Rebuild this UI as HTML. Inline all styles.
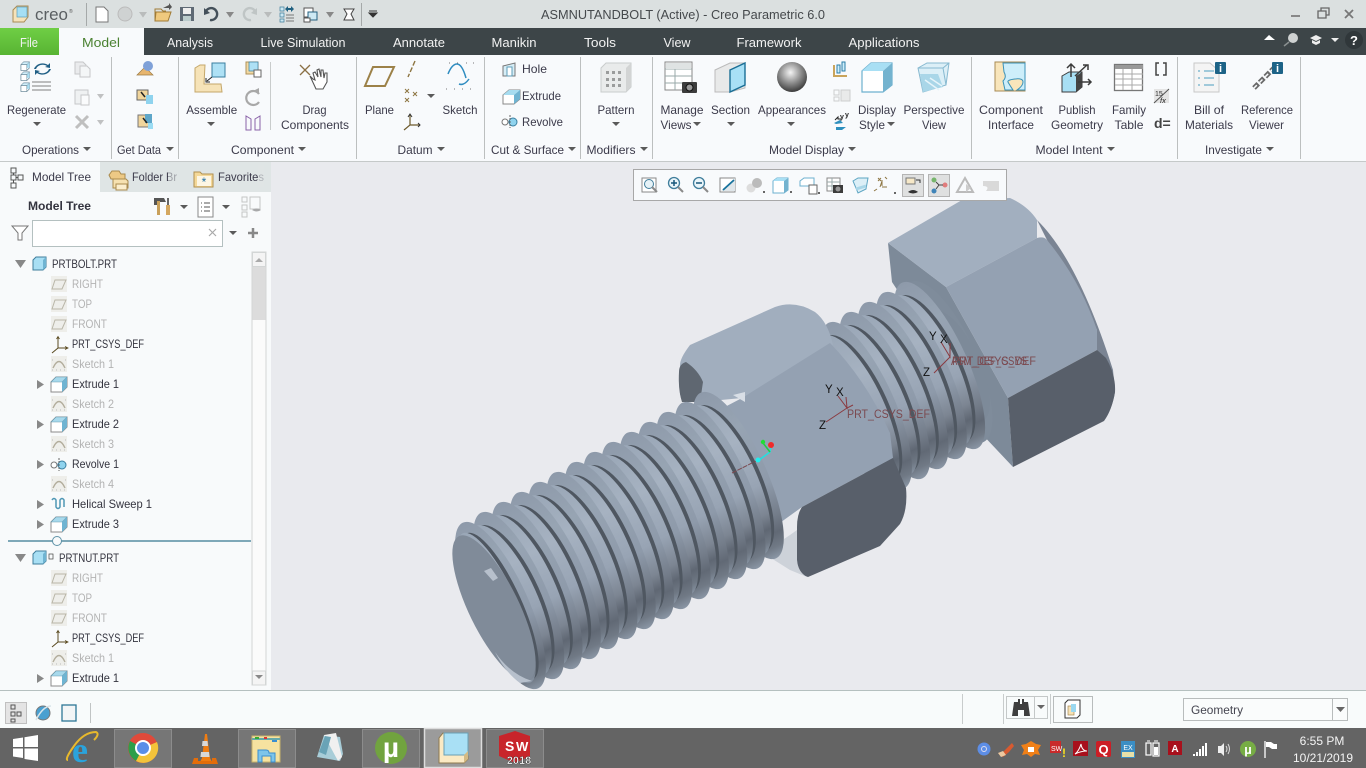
<!DOCTYPE html>
<html><head><meta charset="utf-8"><title>ASMNUTANDBOLT (Active) - Creo Parametric 6.0</title>
<style>
html,body{margin:0;padding:0;width:1366px;height:768px;overflow:hidden;background:#e9eaee}
svg{display:block}
text{font-family:"Liberation Sans",sans-serif;font-size:12px;fill:#3b3a4a}
.c{text-anchor:middle}
.t{fill:#f2f2f2;font-size:12.5px;text-anchor:middle}
.g{fill:#b3b3b3}
.d{fill:#34343f}
.m{fill:#7b4a50;font-size:11.5px}
.k{fill:#111;font-size:11.5px}
</style></head><body>
<svg width="1366" height="768" viewBox="0 0 1366 768" xmlns="http://www.w3.org/2000/svg">
<defs>
<linearGradient id="c" x1="0" x2="1" y1="0" y2="0"><stop offset="0" stop-color="#8e9aaa"/><stop offset=".25" stop-color="#97a4b3"/><stop offset=".6" stop-color="#8e9aaa"/><stop offset=".78" stop-color="#747d8a"/><stop offset=".87" stop-color="#616975"/><stop offset=".94" stop-color="#707985"/><stop offset="1" stop-color="#8b97a6"/></linearGradient>
<linearGradient id="f" x1="0" x2="1" y1="0" y2="0"><stop offset="0" stop-color="#9aa7b7"/><stop offset=".3" stop-color="#a6b2c1"/><stop offset=".6" stop-color="#98a4b4"/><stop offset=".78" stop-color="#7c8592"/><stop offset=".87" stop-color="#5f6773"/><stop offset=".94" stop-color="#6e7783"/><stop offset="1" stop-color="#8894a3"/></linearGradient>
<radialGradient id="sph" cx=".45" cy=".35" r=".7"><stop offset="0" stop-color="#f4f4f4"/><stop offset=".5" stop-color="#8f8f8f"/><stop offset="1" stop-color="#2f2f2f"/></radialGradient>
<linearGradient id="fg" x1="0" x2="0" y1="0" y2="1"><stop offset="0" stop-color="#6fce45"/><stop offset="1" stop-color="#58b433"/></linearGradient>
<g id="p">
<ellipse transform="rotate(65.6)" rx="91" ry="28" fill="url(#c)"/>
<ellipse transform="translate(-6,3.300) rotate(65.6)" rx="80" ry="28" fill="#4f5761"/>
<ellipse transform="translate(-9.500,5.200) rotate(65.6)" rx="82" ry="28" fill="url(#f)"/>
</g>
<g id="cube"><path d="M0 4L4 0H13V9L9 13H0Z" fill="#ffffff" stroke="#5b7d8e"/><path d="M4 0H13V9H4Z" fill="#a9def2"/><path d="M0 4L4 0H13L9 4ZM9 4H0" fill="#d2effa" stroke="#5b7d8e" stroke-width=".6"/><path d="M0 4H9V13H0Z" fill="#fff" stroke="#5b7d8e" stroke-width=".8"/></g>
<g id="pl"><rect x="0" y="0" width="16" height="16" fill="#eeeeea"/><path d="M4 4H15L11 13H1Z" fill="none" stroke="#b9b6a8"/></g>
<g id="sk"><rect x="0" y="0" width="16" height="16" fill="#eeeeea"/><path d="M2 12Q8 -1 14 12" fill="none" stroke="#b2ad9c" stroke-width="1.4"/><path d="M1 14h1M5 14h1M9 14h1M13 14h1M1 4h1M14 4h1" stroke="#bbb"/></g>
<g id="ex"><path d="M1 7L6 2H17V12L12 17H1Z" fill="#fff" stroke="#8b8b8b"/><path d="M1 7L6 2H17L12 7Z" fill="#a8d9ec" stroke="#6a9bb0" stroke-width=".6"/><path d="M12 7L17 2V12L12 17Z" fill="#6fb4d2"/></g>
<g id="cs"><path d="M7 1V12L1 17M7 12H16" fill="none" stroke="#5a4a20"/><path d="M5.5 3L7 0.5 8.5 3M14 10.5l3 1.5-3 1.500" fill="none" stroke="#5a4a20" stroke-width=".8"/></g>
<g id="tri"><path d="M0 0H10L5 7Z" fill="#888"/></g>
<g id="ar"><path d="M0 0H8L4 4Z" fill="#5a5a5a"/></g>
</defs>

<!-- title bar -->
<rect width="1366" height="28" fill="#dbe0e0"/>
<path d="M13 10L17 6H28V17L24 22H13Z" fill="#f6e3ba" stroke="#a88b55"/><rect x="17" y="7" width="10" height="10" fill="#a6dff4" stroke="#5f9db8" stroke-width=".7"/>
<text x="35" y="20" style="font-size:17px;fill:#5a5f62" textLength="33" lengthAdjust="spacingAndGlyphs">creo</text><text x="69" y="13" style="font-size:5px;fill:#555">®</text>
<rect x="86" y="3" width="1" height="23" fill="#a5a9a9"/>
<path d="M96 7H104L108 11V22H96Z" fill="#fff" stroke="#777"/>
<circle cx="125" cy="14" r="7" fill="#cfd2d2" stroke="#bbb"/>
<use href="#tri" transform="translate(139,12) scale(.8)" opacity=".4"/>
<path d="M156 12H171L168 21H155Z" fill="#efc97e" stroke="#a07b36"/><path d="M155 21V9H161L163 11H166" fill="none" stroke="#a07b36"/><path d="M163 8l6-3v-2l3 4-3 3v-2z" fill="#555"/>
<path d="M180 7H194V21H180Z" fill="#5f6a75"/><rect x="183" y="8" width="8" height="6" fill="#eee"/><rect x="183" y="16" width="8" height="5" fill="#bcc"/>
<path d="M206 11a6 6 0 1 1 4 9" fill="none" stroke="#44505a" stroke-width="2.4"/><path d="M204 8l0 7 6-2z" fill="#44505a"/>
<use href="#tri" transform="translate(226,12) scale(.8)"/>
<path d="M255 11a6 6 0 1 0-4 9" fill="none" stroke="#bfc5c5" stroke-width="2.400"/><path d="M257 8l0 7-6-2z" fill="#bfc5c5"/>
<use href="#tri" transform="translate(264,12) scale(.8)" opacity=".4"/>
<path d="M280 7h4v4h-4zM280 13h4v4h-4zM280 19h4v3h-4z" fill="#cde9f4" stroke="#3f7d9b" stroke-width=".7"/><path d="M286 15h8M286 18h8M286 21h8" stroke="#777"/><path d="M285 9l3-3v2h3v-2l3 3-3 3v-2h-3v2z" fill="#1f6080"/>
<rect x="304" y="8" width="9" height="9" fill="#fff" stroke="#555"/><rect x="308" y="12" width="9" height="8" fill="#cde9f4" stroke="#24607f"/><rect x="304" y="18" width="6" height="4" fill="#fff" stroke="#555"/>
<use href="#tri" transform="translate(326,12) scale(.8)"/>
<path d="M344 9h10l-3 5 3 6h-10l3-6z" fill="#fff" stroke="#444"/>
<rect x="361" y="3" width="1" height="23" fill="#a5a9a9"/>
<path d="M369 11h8M369 13h8l-4 4z" stroke="#333" fill="#333"/>
<text x="683" y="19" class="c" style="font-size:13px;fill:#45494c" textLength="284" lengthAdjust="spacingAndGlyphs">ASMNUTANDBOLT (Active) - Creo Parametric 6.0</text>
<rect x="1291" y="15" width="9" height="2" fill="#888"/>
<path d="M1318 11h8v7h-8zM1321 11v-3h8v7h-3" fill="none" stroke="#666" stroke-width="1.300"/>
<path d="M1345 10l8 8M1353 10l-8 8" stroke="#777" stroke-width="1.800"/>

<!-- tab bar -->
<rect y="28" width="1366" height="27" fill="#3d4548"/>
<rect y="28" width="59" height="27" fill="url(#fg)"/>
<rect x="59" y="28" width="85" height="27" fill="#f8fafc"/>
<text x="29" y="47" class="t" textLength="18" lengthAdjust="spacingAndGlyphs">File</text>
<text x="101" y="47" class="c" style="fill:#4b8232;font-size:12.500px" textLength="38" lengthAdjust="spacingAndGlyphs">Model</text>
<text x="190" y="47" class="t" textLength="46" lengthAdjust="spacingAndGlyphs">Analysis</text><text x="303" y="47" class="t" textLength="85" lengthAdjust="spacingAndGlyphs">Live Simulation</text><text x="419" y="47" class="t" textLength="52" lengthAdjust="spacingAndGlyphs">Annotate</text><text x="514" y="47" class="t" textLength="45" lengthAdjust="spacingAndGlyphs">Manikin</text><text x="600" y="47" class="t" textLength="32" lengthAdjust="spacingAndGlyphs">Tools</text><text x="677" y="47" class="t" textLength="27" lengthAdjust="spacingAndGlyphs">View</text><text x="769" y="47" class="t" textLength="65" lengthAdjust="spacingAndGlyphs">Framework</text><text x="884" y="47" class="t" textLength="71" lengthAdjust="spacingAndGlyphs">Applications</text>
<path d="M1264 40l5-5 6 5z" fill="#fff"/>
<circle cx="1293" cy="38" r="5" fill="#cfd2d2"/><path d="M1289 42l-5 4" stroke="#8a9090" stroke-width="1.500"/>
<path d="M1310 38l6-3 6 3-6 3zM1312 40v3l4 2 4-2v-3l-4 2z" fill="#eee"/>
<path d="M1331 38h8l-4 4z" fill="#eee"/>
<circle cx="1354" cy="40" r="9" fill="#30373a"/><text x="1354" y="45" class="c" style="fill:#fff;font-weight:bold;font-size:13px">?</text>

<!-- ribbon -->
<rect y="55" width="1366" height="106" fill="#f8fafc"/>
<rect y="161" width="1366" height="1" fill="#c5c9c9"/>
<path d="M111.500 57V159M178.500 57V159M356.500 57V159M484.500 57V159M580.500 57V159M652.500 57V159M971.500 57V159M1177.500 57V159M1300.500 57V159" stroke="#bcbfbf"/>
<path d="M270.500 62V130" stroke="#c9cccc"/>

<!-- Operations -->
<use href="#cube" transform="translate(21,62) scale(.65)"/><use href="#cube" transform="translate(21,72) scale(.65)"/><use href="#cube" transform="translate(21,83) scale(.65)"/>
<path d="M36 69a7 6 0 0 1 11-3l-2 1 5 1v-5l-2 2a9 8 0 0 0-14 4z" fill="#205f85"/><path d="M49 69a7 6 0 0 1-11 3l2-1-5-1v5l2-2a9 8 0 0 0 14-4z" fill="#205f85"/>
<path d="M32 82h19M32 86h19M32 90h19" stroke="#999" stroke-width="1.300"/>
<text x="36.500" y="114" class="c" textLength="59" lengthAdjust="spacingAndGlyphs">Regenerate</text><use href="#ar" transform="translate(33,122)"/>
<g opacity=".3"><path d="M75 62h8l3 3v9h-11z" fill="#ccc" stroke="#555"/><path d="M80 66h7l3 3v8h-10z" fill="#eee" stroke="#555"/><path d="M75 90h13v14h-13z" fill="#ddd" stroke="#555"/><path d="M81 95h8v10h-8z" fill="#fff" stroke="#555"/></g>
<path d="M76 116l12 12M88 116l-12 12" stroke="#bfbfbf" stroke-width="3"/>
<use href="#tri" transform="translate(97,94) scale(.7)" opacity=".5"/><use href="#tri" transform="translate(97,120) scale(.7)" opacity=".5"/>
<text x="50.500" y="154" class="c" textLength="57" lengthAdjust="spacingAndGlyphs">Operations</text><use href="#ar" transform="translate(83,147)"/>
<!-- Get Data -->
<path d="M137 75l8-8 8 8z" fill="#e7b56e" stroke="#9b7b44" stroke-width=".7"/><circle cx="148" cy="66" r="5" fill="#7fa1d8"/>
<rect x="137" y="90" width="11" height="10" fill="#f1d59c" stroke="#666"/><rect x="146" y="95" width="7" height="9" fill="#8fd3ee"/><path d="M141 92l4 5" stroke="#222" stroke-width="1.500"/>
<rect x="138" y="115" width="12" height="12" fill="#f1d59c" stroke="#777"/><rect x="145" y="114" width="7" height="9" fill="#5ea6c9"/><rect x="148" y="123" width="5" height="6" fill="#9bdcf3"/><path d="M143 118l4 5" stroke="#222" stroke-width="1.500"/>
<text x="139" y="154" class="c" textLength="44" lengthAdjust="spacingAndGlyphs">Get Data</text><use href="#ar" transform="translate(166,147)"/>
<!-- Component -->
<path d="M195 68l5-3h5l-1 19h17l1 8H195z" fill="#f6e3b8" stroke="#c4a76a"/><rect x="212" y="63" width="13" height="14" fill="#aee1f5" stroke="#3a7fa0"/>
<path d="M212 77l-5 4M206 78v4h4" stroke="#222" fill="none"/>
<text x="211.700" y="114" class="c" textLength="51" lengthAdjust="spacingAndGlyphs">Assemble</text><use href="#ar" transform="translate(207,122)"/>
<rect x="246" y="62" width="12" height="12" fill="#f2d9a3" stroke="#b0925a"/><rect x="249" y="62" width="9" height="9" fill="#aee1f5" stroke="#3a7fa0" stroke-width=".7"/><rect x="254" y="70" width="7" height="7" fill="#fff" stroke="#666"/>
<path d="M259 94a7 7 0 1 0 0 8" fill="none" stroke="#a8a8a8" stroke-width="2.200"/><path d="M253 91l6 3v-6z" fill="#a8a8a8"/>
<path d="M246 130v-14l5 3v11zM260 130v-14l-5 3v11z" fill="none" stroke="#8a63a8"/>
<path d="M300 65l10 10M310 65l-10 10" stroke="#8a7045" stroke-width="1.300"/>
<path d="M310 76l6 13h7l4-7v-9l-2 0-1 5-1-8-2 0v7l-2-8-2 1 1 7-3-5-2 1 2 7-2-1z" fill="#fff" stroke="#555" stroke-width="1.100"/>
<text x="314.500" y="114" class="c" textLength="24" lengthAdjust="spacingAndGlyphs">Drag</text><text x="315" y="129" class="c" textLength="68" lengthAdjust="spacingAndGlyphs">Components</text>
<text x="262.500" y="154" class="c" textLength="63" lengthAdjust="spacingAndGlyphs">Component</text><use href="#ar" transform="translate(298,147)"/>
<!-- Datum -->
<path d="M373 67h21l-9 19h-20z" fill="none" stroke="#9c8148" stroke-width="2"/>
<path d="M415 61l-7 16" stroke="#8d7542" stroke-dasharray="5 2" stroke-width="1.400"/>
<path d="M405 89l4 4M409 89l-4 4M413 92l4 4M417 92l-4 4M405 98l4 4M409 98l-4 4" stroke="#8d7542"/>
<use href="#ar" transform="translate(427,94)"/>
<path d="M410 115v10l-6 5M410 125h10" fill="none" stroke="#6d5a2c" stroke-width="1.200"/><path d="M408 117l2-3 2 3M418 123l2 2-2 2" fill="none" stroke="#333"/>
<text x="379.500" y="114" class="c" textLength="29" lengthAdjust="spacingAndGlyphs">Plane</text>
<path d="M448 74q4-10 9-10t9 14" fill="none" stroke="#2f8cc0" stroke-width="1.500"/><path d="M459 84q5 2 10-5" fill="none" stroke="#2f8cc0" stroke-width="1.500"/>
<path d="M449 63h1M457 63h1M466 63h1M473 63h1M446 89h1M454 89h1M462 89h1M470 89h1" stroke="#777"/>
<text x="460" y="114" class="c" textLength="35" lengthAdjust="spacingAndGlyphs">Sketch</text>
<text x="415" y="154" class="c" textLength="35" lengthAdjust="spacingAndGlyphs">Datum</text><use href="#ar" transform="translate(437,147)"/>
<!-- Cut&Surface -->
<path d="M503 66l12-3v13h-12z" fill="#d6edf6" stroke="#777"/><path d="M507 67h5v9h-5z" fill="#fff" stroke="#5f9db8"/>
<text x="522" y="73" textLength="25" lengthAdjust="spacingAndGlyphs">Hole</text>
<path d="M503 95l6-5h11v9l-6 5h-11z" fill="#fff" stroke="#888"/><path d="M509 90h11l-6 5h-11z" fill="#a6dcf0"/><path d="M514 95l6-5v9l-6 5z" fill="#6fb4d2"/>
<text x="522" y="100" textLength="39" lengthAdjust="spacingAndGlyphs">Extrude</text>
<circle cx="505" cy="122" r="3" fill="#fff" stroke="#777"/><circle cx="513" cy="122" r="4" fill="#8fd3ee" stroke="#3a7fa0"/><path d="M510 115v13" stroke="#666" stroke-dasharray="2 1"/>
<text x="522" y="126" textLength="41" lengthAdjust="spacingAndGlyphs">Revolve</text>
<text x="527.500" y="154" class="c" textLength="73" lengthAdjust="spacingAndGlyphs">Cut &amp; Surface</text><use href="#ar" transform="translate(568,147)"/>
<!-- Modifiers -->
<path d="M601 68l5-5h25v24l-5 5h-25z" fill="#e9ebeb" stroke="#c9cccc"/><path d="M626 68l5-5v24l-5 5z" fill="#d2d4d4"/>
<path d="M606 71h3v3h-3zM612 71h3v3h-3zM618 71h3v3h-3zM606 78h3v3h-3zM612 78h3v3h-3zM618 78h3v3h-3zM606 84h3v3h-3zM612 84h3v3h-3zM618 84h3v3h-3z" fill="#9a9c9c"/>
<text x="616" y="114" class="c" textLength="37" lengthAdjust="spacingAndGlyphs">Pattern</text><use href="#ar" transform="translate(612,122)"/>
<text x="611" y="154" class="c" textLength="49" lengthAdjust="spacingAndGlyphs">Modifiers</text><use href="#ar" transform="translate(640,147)"/>
<!-- Model Display -->
<rect x="665" y="62" width="27" height="28" fill="#fff" stroke="#888"/><path d="M665 69h27M665 76h27M665 83h27M675 69v21" stroke="#9aa"/><rect x="666" y="63" width="25" height="6" fill="#dfe3e3"/>
<rect x="682" y="82" width="15" height="11" rx="1" fill="#3c3c3c"/><circle cx="689.500" cy="87.500" r="3.500" fill="#999" stroke="#111"/>
<text x="682" y="114" class="c" textLength="43" lengthAdjust="spacingAndGlyphs">Manage</text><text x="676" y="129" class="c" textLength="31" lengthAdjust="spacingAndGlyphs">Views</text><use href="#ar" transform="translate(693,122)"/>
<path d="M715 70l15-7h15v25l-15 4h-15z" fill="#e8e9e9" stroke="#bbb"/><path d="M730 70l15-7v22l-15 7z" fill="#a8e0f6" stroke="#1b6f96" stroke-width="1.400"/>
<text x="730.500" y="114" class="c" textLength="39" lengthAdjust="spacingAndGlyphs">Section</text><use href="#ar" transform="translate(727,122)"/>
<circle cx="792" cy="77" r="15" fill="url(#sph)"/>
<text x="792" y="114" class="c" textLength="68" lengthAdjust="spacingAndGlyphs">Appearances</text><use href="#ar" transform="translate(787,122)"/>
<path d="M834 65v11h13" fill="none" stroke="#c9a45b" stroke-width="2"/><path d="M837 65h3v8h-3zM842 62h3v9h-3z" fill="#cfeefa" stroke="#2b7ea8"/>
<g opacity=".55"><rect x="834" y="90" width="5" height="5" fill="none" stroke="#aaa"/><rect x="834" y="97" width="5" height="4" fill="none" stroke="#aaa"/><rect x="841" y="90" width="9" height="11" fill="#ddd" stroke="#aaa"/></g>
<text x="840" y="119" style="font-size:7px;fill:#222;font-weight:bold">y</text><text x="845" y="117" style="font-size:7px;fill:#222;font-weight:bold">y</text><path d="M834 123l6-3 3 3-7 1zM836 127h10l-4 3h-6z" fill="#2e8fbe"/><path d="M835 120l3-3v2h3" fill="none" stroke="#222"/>
<path d="M862 71l9-8h21v22l-9 7h-21z" fill="#fff" stroke="#6db0cf" stroke-width="1.200"/><path d="M871 63h21l-9 8h-21z" fill="#a8dff4"/><path d="M883 71l9-8v22l-9 7z" fill="#74b3cf"/>
<text x="877" y="114" class="c" textLength="38" lengthAdjust="spacingAndGlyphs">Display</text><text x="872" y="129" class="c" textLength="26" lengthAdjust="spacingAndGlyphs">Style</text><use href="#ar" transform="translate(887,122)"/>
<path d="M918 68l9-5h22l-3 22-23 7z" fill="#dceff7" stroke="#87b9d0"/><path d="M918 68h25l6-5M943 68l3 17" fill="none" stroke="#87b9d0"/><path d="M923 92l20-5-5-13-18 0z" fill="#a9d6e8"/><path d="M925 80l14 10M930 78l12 8" stroke="#e6f4fa" stroke-width="1.500"/>
<text x="934" y="114" class="c" textLength="61" lengthAdjust="spacingAndGlyphs">Perspective</text><text x="934" y="129" class="c" textLength="24" lengthAdjust="spacingAndGlyphs">View</text>
<text x="806.500" y="154" class="c" textLength="75" lengthAdjust="spacingAndGlyphs">Model Display</text><use href="#ar" transform="translate(848,147)"/>
<!-- Model Intent -->
<rect x="995" y="62" width="30" height="29" fill="#f8e5bb" stroke="#a88b55"/><path d="M1003 63h22v27h-8q6-4 6-8t-8-3-7 3 5 8h-8l-2-9q4-4 1-9z" fill="#cdeefa" stroke="#3b92b8"/>
<text x="1011" y="114" class="c" textLength="64" lengthAdjust="spacingAndGlyphs">Component</text><text x="1011" y="129" class="c" textLength="46" lengthAdjust="spacingAndGlyphs">Interface</text>
<path d="M1062 76l7-4h13v15l-6 5h-14z" fill="#a8dff4" stroke="#3b3b3b"/><path d="M1076 76l6-4v15l-6 5z" fill="#444"/>
<path d="M1071 77V64M1067 68l4-4 4 4M1075 76l12-11M1083 65h5v5M1078 82h13M1088 79l3 3-3 3" fill="none" stroke="#3b3b3b" stroke-width="1.500"/>
<text x="1077" y="114" class="c" textLength="37" lengthAdjust="spacingAndGlyphs">Publish</text><text x="1077" y="129" class="c" textLength="52" lengthAdjust="spacingAndGlyphs">Geometry</text>
<rect x="1114.500" y="64.500" width="28" height="26" fill="#fff" stroke="#777" stroke-width="1.300"/><rect x="1115" y="65" width="28" height="4" fill="#999"/><path d="M1115 74h28M1115 79h28M1115 85h28M1123 69v21M1132 69v21" stroke="#aaa"/>
<text x="1129" y="114" class="c" textLength="34" lengthAdjust="spacingAndGlyphs">Family</text><text x="1129" y="129" class="c" textLength="29" lengthAdjust="spacingAndGlyphs">Table</text>
<path d="M1159 63h-3v12h3M1163 63h3v12h-3" fill="none" stroke="#444" stroke-width="1.500"/>
<rect x="1154" y="89" width="15" height="14" fill="#e4e4e4"/><path d="M1154 103l15-14" stroke="#555"/><text x="1155" y="96" style="font-size:7px;fill:#333">15</text><text x="1160" y="103" style="font-size:7.500px;fill:#222;font-style:italic">fx</text>
<text x="1154" y="128" style="font-size:14px;font-weight:bold;fill:#444">d=</text>
<text x="1069" y="154" class="c" textLength="67" lengthAdjust="spacingAndGlyphs">Model Intent</text><use href="#ar" transform="translate(1107,147)"/>
<!-- Investigate -->
<path d="M1194 63h16l9 8v21h-25z" fill="#f4f4f4" stroke="#c8c8c8"/><path d="M1198 71h2M1204 71h10M1198 78h2M1204 78h10M1198 85h2M1204 85h10" stroke="#4b9ec0"/>
<rect x="1215" y="62" width="11" height="12" rx="1" fill="#1d6387"/><text x="1220.500" y="72" class="c" style="fill:#fff;font-size:11px;font-weight:bold">i</text>
<text x="1209" y="114" class="c" textLength="30" lengthAdjust="spacingAndGlyphs">Bill of</text><text x="1209" y="129" class="c" textLength="48" lengthAdjust="spacingAndGlyphs">Materials</text>
<path d="M1254 88l20-20" stroke="#6a6a6a" stroke-width="5" stroke-dasharray="6 2"/><path d="M1254 88l20-20" stroke="#f8fafc" stroke-width="1.500" stroke-dasharray="4 4"/>
<rect x="1272" y="62" width="11" height="12" rx="1" fill="#1d6387"/><text x="1277.500" y="72" class="c" style="fill:#fff;font-size:11px;font-weight:bold">i</text>
<text x="1267" y="114" class="c" textLength="52" lengthAdjust="spacingAndGlyphs">Reference</text><text x="1266.500" y="129" class="c" textLength="35" lengthAdjust="spacingAndGlyphs">Viewer</text>
<text x="1233.500" y="154" class="c" textLength="57" lengthAdjust="spacingAndGlyphs">Investigate</text><use href="#ar" transform="translate(1266,147)"/>

<!-- viewport bg -->
<rect x="273" y="162" width="1093" height="528" fill="#e9eaee"/>

<!-- left panel -->
<rect y="162" width="271" height="528" fill="#f8fafb"/>
<rect x="100" y="162" width="171" height="30" fill="#dfe5e5"/>
<path d="M11 168h5v5h-5zM11 175h5v5h-5zM11 183h5v5h-5zM18 175h5v5h-5zM13.500 173v2M13.500 180v3M16 177.500h2" fill="none" stroke="#555"/>
<text x="32" y="181" textLength="59" lengthAdjust="spacingAndGlyphs">Model Tree</text>
<path d="M109 175l3-4h7l2 3h4v5h-14z" fill="#edc985" stroke="#a98a4e"/><path d="M113 179h13l2 2v7h-15z" fill="#f6e1b0" stroke="#a98a4e"/><path d="M116 184h11v6h-11z" fill="#fbeecd" stroke="#a98a4e"/>
<text x="132" y="181" textLength="45" lengthAdjust="spacingAndGlyphs">Folder Br</text><rect x="168" y="165" width="12" height="22" fill="#dfe5e5" opacity=".6"/>
<path d="M194 172h6l2 2h11v13h-19z" fill="#f4d898" stroke="#b09050"/><rect x="197" y="176" width="14" height="10" fill="#fdf6e4"/><text x="204" y="186" class="c" style="fill:#1d6fa6;font-size:12px">*</text>
<text x="218" y="181" textLength="46" lengthAdjust="spacingAndGlyphs">Favorites</text><rect x="258" y="165" width="6" height="22" fill="#dfe5e5" opacity=".7"/>
<text x="28" y="210" class="d" style="font-weight:bold" textLength="63" lengthAdjust="spacingAndGlyphs">Model Tree</text>
<path d="M154 198h10l2 4h-7v3h-5z" fill="#555"/><rect x="157" y="201" width="3" height="14" fill="#c9a05a"/><rect x="167" y="198" width="2" height="8" fill="#666"/><rect x="166" y="205" width="4" height="10" fill="#d4a75f"/>
<use href="#ar" transform="translate(180,205)" /><path d="M198 197h15v20h-15z" fill="#fff" stroke="#888"/><path d="M201 203h1M204 203h6M201 207h1M204 207h6M201 211h1M204 211h6" stroke="#555"/>
<use href="#ar" transform="translate(222,205)"/>
<g opacity=".4"><path d="M242 197h5v5h-5zM242 205h5v5h-5zM242 212h5v5h-5zM250 197h10v12h-10z" fill="none" stroke="#777"/><path d="M252 210q5-3 9 0q-4 3-9 0z" fill="#333"/></g>
<path d="M12 226h16l-6 7v7h-4v-7z" fill="#fff" stroke="#777"/>
<rect x="32.500" y="220.500" width="190" height="26" fill="#fff" stroke="#b4c0c0"/>
<path d="M209 229l7 7M216 229l-7 7" stroke="#aaa" stroke-width="1.200"/>
<use href="#ar" transform="translate(229,231)"/><path d="M253 228v10M248 233h10" stroke="#888" stroke-width="2.500"/>
<!-- scrollbar -->
<rect x="252" y="252" width="14" height="433" fill="#fbfbfb" stroke="#d3d6d6"/>
<rect x="252.500" y="267" width="13" height="53" fill="#dcdcdc"/><rect x="252.500" y="252.500" width="13" height="14" fill="#f4f4f4" stroke="#d3d6d6"/><rect x="252.500" y="671" width="13" height="14" fill="#f4f4f4" stroke="#d3d6d6"/>
<path d="M255 262l4-4 4 4z" fill="#aaa"/><path d="M255 675l4 4 4-4z" fill="#888"/>
<!-- tree -->
<path d="M15 260h11l-5.500 8z" fill="#888"/>
<path d="M33 260l3-3h10v10l-3 3h-10z" fill="#a8dff4" stroke="#3f7d9b"/><path d="M43 260l3-3v10l-3 3z" fill="#6fb4d2"/>
<text x="52" y="268" class="d" textLength="65" lengthAdjust="spacingAndGlyphs">PRTBOLT.PRT</text>
<use href="#pl" transform="translate(51,276)"/><text x="72" y="288" class="g" textLength="31" lengthAdjust="spacingAndGlyphs">RIGHT</text>
<use href="#pl" transform="translate(51,296)"/><text x="72" y="308" class="g" textLength="20" lengthAdjust="spacingAndGlyphs">TOP</text>
<use href="#pl" transform="translate(51,316)"/><text x="72" y="328" class="g" textLength="35" lengthAdjust="spacingAndGlyphs">FRONT</text>
<use href="#cs" transform="translate(51,336)"/><text x="72" y="348" class="d" textLength="72" lengthAdjust="spacingAndGlyphs">PRT_CSYS_DEF</text>
<use href="#sk" transform="translate(51,356)"/><text x="72" y="368" class="g" textLength="42" lengthAdjust="spacingAndGlyphs">Sketch 1</text>
<path d="M37 380l7 4.500-7 4.500z" fill="#888"/><use href="#ex" transform="translate(50,375)"/><text x="72" y="388" class="d" textLength="47" lengthAdjust="spacingAndGlyphs">Extrude 1</text>
<use href="#sk" transform="translate(51,396)"/><text x="72" y="408" class="g" textLength="42" lengthAdjust="spacingAndGlyphs">Sketch 2</text>
<path d="M37 420l7 4.500-7 4.500z" fill="#888"/><use href="#ex" transform="translate(50,415)"/><text x="72" y="428" class="d" textLength="47" lengthAdjust="spacingAndGlyphs">Extrude 2</text>
<use href="#sk" transform="translate(51,436)"/><text x="72" y="448" class="g" textLength="42" lengthAdjust="spacingAndGlyphs">Sketch 3</text>
<path d="M37 460l7 4.500-7 4.500z" fill="#888"/><circle cx="54" cy="465" r="3" fill="#fff" stroke="#777"/><circle cx="62" cy="465" r="4" fill="#8fd3ee" stroke="#3a7fa0"/><path d="M59 458v13" stroke="#666" stroke-dasharray="2 1"/><text x="72" y="468" class="d" textLength="47" lengthAdjust="spacingAndGlyphs">Revolve 1</text>
<use href="#sk" transform="translate(51,476)"/><text x="72" y="488" class="g" textLength="42" lengthAdjust="spacingAndGlyphs">Sketch 4</text>
<path d="M37 500l7 4.500-7 4.500z" fill="#888"/><path d="M52 500q2-3 4 0v7q2 3 4 0v-7q2-3 4 0v7" fill="none" stroke="#4f97b5" stroke-width="1.500"/><text x="72" y="508" class="d" textLength="80" lengthAdjust="spacingAndGlyphs">Helical Sweep 1</text>
<path d="M37 520l7 4.500-7 4.500z" fill="#888"/><use href="#ex" transform="translate(50,515)"/><text x="72" y="528" class="d" textLength="47" lengthAdjust="spacingAndGlyphs">Extrude 3</text>
<rect x="8" y="540" width="243" height="2" fill="#7ea8b8"/><circle cx="57" cy="541" r="4.500" fill="#f8fafb" stroke="#5f93a8"/>
<path d="M15 554h11l-5.500 8z" fill="#888"/>
<path d="M33 554l3-3h10v10l-3 3h-10z" fill="#a8dff4" stroke="#3f7d9b"/><path d="M43 554l3-3v10l-3 3z" fill="#6fb4d2"/>
<rect x="49" y="554" width="4" height="5" fill="none" stroke="#444" stroke-width=".7"/>
<text x="59" y="562" class="d" textLength="60" lengthAdjust="spacingAndGlyphs">PRTNUT.PRT</text>
<use href="#pl" transform="translate(51,570)"/><text x="72" y="582" class="g" textLength="31" lengthAdjust="spacingAndGlyphs">RIGHT</text>
<use href="#pl" transform="translate(51,590)"/><text x="72" y="602" class="g" textLength="20" lengthAdjust="spacingAndGlyphs">TOP</text>
<use href="#pl" transform="translate(51,610)"/><text x="72" y="622" class="g" textLength="35" lengthAdjust="spacingAndGlyphs">FRONT</text>
<use href="#cs" transform="translate(51,630)"/><text x="72" y="642" class="d" textLength="72" lengthAdjust="spacingAndGlyphs">PRT_CSYS_DEF</text>
<use href="#sk" transform="translate(51,650)"/><text x="72" y="662" class="g" textLength="42" lengthAdjust="spacingAndGlyphs">Sketch 1</text>
<path d="M37 674l7 4.500-7 4.500z" fill="#888"/><use href="#ex" transform="translate(50,669)"/><text x="72" y="682" class="d" textLength="47" lengthAdjust="spacingAndGlyphs">Extrude 1</text>

<!-- MODEL: bolt head -->
<path d="M888 243L892 282L960 385L980 432L1013 467L1008 398L946 287Z" fill="#7d8a99"/>
<path d="M1037 220Q1078 260 1113 370L1115 392Q1112 410 1104 419L1097 350L1097 330L1047 240Z" fill="#7a8493"/>
<path d="M888 243L962 200L1010 198Q1028 206 1037 220L1037 238L946 287Z" fill="#a2afbf"/>
<path d="M946 287L1037 238Q1044 236 1047 240Q1080 280 1097 330L1097 350L1008 398Z" fill="#94a1b2"/>
<path d="M1008 398L1097 350L1106 358Q1116 375 1115 392Q1112 410 1104 421L1013 467Z" fill="#585f6a"/>
<!-- threads near head -->
<ellipse transform="translate(947,362) rotate(65.600)" rx="88" ry="30" fill="#7f8c9b"/>
<ellipse transform="translate(958,366) rotate(65.600)" rx="60" ry="22" fill="#7d8a99"/>
<use href="#p" transform="translate(939.700,365.500)"/>
<use href="#p" transform="translate(921.400,375.500)"/>
<use href="#p" transform="translate(903.100,385.500)"/>
<use href="#p" transform="translate(884.800,395.500)"/>
<use href="#p" transform="translate(866.500,405.500)"/>
<!-- MODEL: nut -->
<path d="M680 365Q680 358 690 345L775 307Q795 300 815 312Q828 322 833 345L742 398L700 402L680 395Z" fill="#a1aebe"/>
<path d="M679 372Q679 364 686 362Q698 370 703 382L700 402L682 402Q678 390 679 372Z" fill="#5f6771"/>
<path d="M742 398L830 343Q866 380 890 433L893 458L802 507L770 530L700 420Z" fill="#94a1b2"/>
<path d="M733 395L745 392L745 402Z" fill="#d8dee6"/>
<path d="M802 507L893 458L906 488Q908 510 900 524L880 546L808 577Q797 574 797 560L797 527Q797 514 802 507Z" fill="#585f6a"/>
<path d="M763 553L790 535L797 530L797 560Q798 572 807 577L790 570Z" fill="#cdd2d9"/>
<!-- threads front -->
<use href="#p" transform="translate(738.400,475.500)"/>
<use href="#p" transform="translate(720.100,485.500)"/>
<use href="#p" transform="translate(701.800,495.500)"/>
<use href="#p" transform="translate(683.500,505.500)"/>
<use href="#p" transform="translate(665.200,515.500)"/>
<use href="#p" transform="translate(646.900,525.500)"/>
<use href="#p" transform="translate(628.600,535.500)"/>
<use href="#p" transform="translate(610.300,545.500)"/>
<use href="#p" transform="translate(592,555.500)"/>
<use href="#p" transform="translate(573.700,565.500)"/>
<use href="#p" transform="translate(555.400,575.500)"/>
<use href="#p" transform="translate(537.100,585.500)"/>
<use href="#p" transform="translate(518.800,595.500)"/>
<ellipse transform="translate(500.500,605.500) rotate(65.600)" rx="91" ry="28" fill="url(#c)"/>
<ellipse transform="translate(500,606.200) rotate(65.600)" rx="80" ry="22" fill="#4f5761"/>
<ellipse transform="translate(496.500,608) rotate(65.600)" rx="82" ry="22" fill="url(#f)"/>
<ellipse transform="translate(494,608) rotate(64)" rx="80" ry="25" fill="#808b99"/>
<path d="M484 571L491 568L498 578L493 581Z" fill="#b7c0cc"/>
<path d="M495 652Q510 674 532 681L520 683Q505 672 495 652Z" fill="#b7c0cc"/>
<!-- triads -->
<path d="M732 473L762 458" stroke="#7b4a50" stroke-dasharray="5 1"/>
<path d="M759 460L770 452L771 444" fill="none" stroke="#22e0e0" stroke-width="1.500"/><path d="M770 452L763 443" stroke="#22cc44" stroke-width="1.500"/>
<circle cx="758" cy="460" r="2.500" fill="#22eeee"/><circle cx="771" cy="445" r="3" fill="#f02a2a"/><circle cx="763" cy="442" r="2.200" fill="#22dd33"/>
<path d="M826 422L847 408L853 405M838 396L847 408L846 397" fill="none" stroke="#8a3a40"/>
<path d="M934 373L950 357M941 342L950 357L950 343" fill="none" stroke="#8a3a40"/>
<text x="825" y="393" class="k">Y</text><text x="836" y="396" class="k">X</text><text x="819" y="429" class="k">Z</text>
<text x="929" y="340" class="k">Y</text><text x="940" y="343" class="k">X</text><text x="923" y="376" class="k">Z</text>
<text x="847" y="418" class="m" textLength="83" lengthAdjust="spacingAndGlyphs">PRT_CSYS_DEF</text>
<text x="951" y="365" class="m" textLength="76" lengthAdjust="spacingAndGlyphs">ASM_DEF_CSYS</text><text x="952" y="365" class="m" textLength="84" lengthAdjust="spacingAndGlyphs">PRT_CSYS_DEF</text>

<!-- graphics toolbar -->
<rect x="633.500" y="169.500" width="373" height="31" fill="#f8fafc" stroke="#a8a8a8"/>
<rect x="642" y="178" width="14" height="14" fill="#fff" stroke="#888"/><circle cx="649" cy="184" r="4.500" fill="#e6f2f7" stroke="#3f7d9b"/><path d="M652 187l5 5" stroke="#8a8a8a" stroke-width="2"/>
<circle cx="674" cy="183" r="5.500" fill="#eaf5fa" stroke="#3f7d9b" stroke-width="1.300"/><path d="M671 183h6M674 180v6" stroke="#17577a" stroke-width="1.500"/><path d="M678 187l5 5" stroke="#8a8a8a" stroke-width="2"/>
<circle cx="699" cy="183" r="5.500" fill="#eaf5fa" stroke="#3f7d9b" stroke-width="1.300"/><path d="M696 183h6" stroke="#17577a" stroke-width="1.500"/><path d="M703 187l5 5" stroke="#8a8a8a" stroke-width="2"/>
<rect x="720" y="178" width="15" height="14" fill="#fff" stroke="#888"/><path d="M721 191h14v-13z" fill="#dfe6ea"/><path d="M723 190l11-10" stroke="#17729c" stroke-width="1.800"/>
<circle cx="751" cy="188" r="4.500" fill="#ddd"/><circle cx="757" cy="183" r="5" fill="#bbb"/><path d="M763 191h2v2h-2z" fill="#666"/>
<path d="M773 181l4-3h11v12l-4 3h-11z" fill="#fff" stroke="#6db0cf"/><path d="M777 178h11l-4 3h-11z" fill="#a8dff4"/><path d="M784 181l4-3v12l-4 3z" fill="#74b3cf"/><path d="M790 191h2v2h-2z" fill="#666"/>
<path d="M800 181l4-3h10v8h-14z" fill="#fff" stroke="#6db0cf"/><rect x="809" y="185" width="8" height="9" fill="#fff" stroke="#666"/><path d="M818 192h2v2h-2z" fill="#666"/>
<rect x="827" y="178" width="13" height="13" fill="#fff" stroke="#888"/><path d="M827 182h13M827 186h13M832 178v13" stroke="#9aa"/><rect x="833" y="185" width="10" height="8" fill="#3c3c3c"/><circle cx="838" cy="189" r="2.500" fill="#999"/>
<path d="M853 181l5-3h10l-2 11-8 4z" fill="#dceff7" stroke="#5da5c2"/><path d="M856 189l10-3" stroke="#a9d6e8" stroke-width="3"/>
<path d="M878 178l3 3M881 178l-3 3M885 177l2 2M874 191l3-2M880 187l2-6M882 186v-6M882 187h5" stroke="#8d7542"/><path d="M894 192h2v2h-2z" fill="#666"/>
<rect x="902.500" y="174.500" width="21" height="22" fill="#dfe0e0" stroke="#b4b4b4"/><rect x="906" y="178" width="9" height="6" fill="#f6e8c8" stroke="#777"/><path d="M916 180h4v3" fill="none" stroke="#333"/><path d="M908 192q5-4 10 0q-5 3-10 0z" fill="#333"/>
<rect x="928.500" y="174.500" width="21" height="22" fill="#dfe0e0" stroke="#b4b4b4"/><circle cx="934" cy="180" r="2.500" fill="#76b56b"/><circle cx="934" cy="191" r="2.500" fill="#3f84b8"/><circle cx="945" cy="185" r="2.500" fill="#e07c7c"/><path d="M936 182l3 3h4M936 189l3-4" fill="none" stroke="#444"/>
<path d="M965 178l8 14h-16z" fill="none" stroke="#bbb" stroke-width="2"/><path d="M966 184l5 4-5 4z" fill="#ccc"/>
<path d="M983 181h16v10h-13q4-5-3-5z" fill="#d9d9d9"/>

<!-- status bar -->
<rect y="690" width="1366" height="38" fill="#f8fbfb"/>
<rect y="690" width="1366" height="1" fill="#b5c0bf"/>
<rect x="5.500" y="702.500" width="21" height="21" fill="#e4e4e4" stroke="#c0c0c0"/>
<path d="M14 705h4v4h-4zM14 712h4v4h-4zM14 719h4v3h-4zM20 712h4v4h-4z" fill="none" stroke="#555" transform="translate(-3,0)"/>
<circle cx="43" cy="713" r="7" fill="#4aa0d0" stroke="#777"/><path d="M36 720q7-14 15-14" fill="none" stroke="#d8e5ea" stroke-width="1.500"/>
<rect x="62" y="705" width="14" height="16" fill="#f2f5f6" stroke="#2d7796" stroke-width="1.300"/>
<rect x="90" y="703" width="1" height="20" fill="#c0c4c4"/>
<rect x="962" y="694" width="1" height="30" fill="#c8cccc"/><rect x="1003" y="694" width="1" height="30" fill="#c8cccc"/><rect x="1050" y="694" width="1" height="30" fill="#c8cccc"/>
<rect x="1006.500" y="696.500" width="41" height="22" fill="#f8fbfb" stroke="#c4c8c8"/><rect x="1034" y="697" width="1" height="22" fill="#c4c8c8"/>
<path d="M1012 716l2-14h4v-3h2v5h2v-5h2v3h4l2 14h-6v-6h-6v6z" fill="#3e3e3e"/><path d="M1037 705h8l-4 4z" fill="#666"/>
<rect x="1053.500" y="696.500" width="39" height="26" fill="#f8fbfb" stroke="#b8bcbc"/>
<path d="M1065 703l3-3h12v15l-3 3h-12z" fill="#fff" stroke="#333"/><rect x="1068" y="706" width="6" height="9" fill="#f6e2b5" stroke="#a88b55" stroke-width=".7"/><rect x="1071" y="704" width="5" height="8" fill="#9bd8f0"/>
<rect x="1183.500" y="698.500" width="164" height="22" fill="#fafcfc" stroke="#b8bcbc"/><rect x="1332" y="699" width="1" height="22" fill="#b8bcbc"/>
<text x="1191" y="714" style="fill:#454550" textLength="52" lengthAdjust="spacingAndGlyphs">Geometry</text><path d="M1336 707h9l-4.500 5z" fill="#666"/>

<!-- taskbar -->
<rect y="728" width="1366" height="40" fill="#646464"/>
<path d="M13 739l10-1.500V747H13zM24.500 737.300L38 735v12H24.500zM13 748.500h10V758l-10-1.500zM24.500 748.500H38V761l-13.500-2z" fill="#fff"/>
<text x="80" y="762" class="c" style="fill:#2aa3dc;font-size:36px;font-weight:bold;font-family:'Liberation Serif',serif">e</text><path d="M68 760q-4 0 6-14t22-14q4 2-2 8" fill="none" stroke="#e8b92c" stroke-width="2"/>
<rect x="114.500" y="729.500" width="57" height="38" fill="#767676" stroke="#8c8c8c"/>
<circle cx="143" cy="748" r="15" fill="#e04a3a"/><path d="M143 748L130 741A15 15 0 0 0 136 761Z" fill="#2d9e4a"/><path d="M143 748L136 761A15 15 0 0 0 157 742Z" fill="#f3c33a"/><circle cx="143" cy="748" r="7" fill="#5a8ee8" stroke="#fff" stroke-width="2"/>
<path d="M199 764l3-6 3-24h2l3 24 3 6z" fill="#f07d12"/><path d="M201 752h8l.6 5h-9.200zM202.500 741h5l.5 5h-6z" fill="#d8d8d8"/><path d="M192 764h26l-2 -6h-4v3h-14v-3h-4z" fill="#e36d0a"/>
<rect x="238.500" y="729.500" width="57" height="38" fill="#767676" stroke="#8c8c8c"/>
<path d="M252 736h28v26h-28z" fill="#f6e2a0" stroke="#c7b36b"/><path d="M252 739h28" stroke="#6aa" stroke-width="2"/><rect x="255" y="737" width="4" height="2" fill="#3a3"/><rect x="264" y="737" width="3" height="2" fill="#d33"/><rect x="272" y="740" width="5" height="2" fill="#3a8ed0"/><path d="M258 762v-12h8q3 0 3 3h6v9h-4v-6h-9v6z" fill="#7ec5ea" stroke="#3a8ed0"/>
<path d="M317 757l7-22 16 2 3 17-3 7z" fill="#a8cdd8"/><path d="M324 735l12-2 6 24-4 4z" fill="#f0f0f0"/><path d="M319 752l6-16 6 1-5 18z" fill="#69a3b6"/>
<rect x="362.500" y="729.500" width="57" height="38" fill="#767676" stroke="#8c8c8c"/>
<circle cx="391" cy="748" r="16" fill="#71a33f"/><text x="391" y="757" class="c" style="fill:#fff;font-size:28px;font-weight:bold">µ</text>
<rect x="424.500" y="728.500" width="57" height="39" fill="#9b9b9b" stroke="#ddd" stroke-width="1.500"/>
<path d="M439 738l4-5h25v26l-4 4h-25z" fill="#fbeac4" stroke="#8f7a4f"/><rect x="444" y="733" width="24" height="22" fill="#a9e0f5" stroke="#6a9fb4"/><path d="M464 755l4-4v8l-4 4z" fill="#d4bb85"/>
<rect x="486.500" y="729.500" width="57" height="38" fill="#767676" stroke="#8c8c8c"/>
<path d="M499 736l16-5 15 5v20l-15 7-16-7z" fill="#c8252b"/>
<text x="505" y="751" style="fill:#fff;font-size:14px;font-weight:bold">S</text><text x="516" y="751" style="fill:#fff;font-size:13px;font-weight:bold">W</text>
<text x="519" y="764" class="c" style="fill:#fff;font-size:11px;font-weight:bold;stroke:#000;stroke-width:.3">2018</text>
<!-- tray -->
<circle cx="984" cy="749" r="6.500" fill="#5d8ee6"/><circle cx="984" cy="749" r="2.500" fill="none" stroke="#dde"/>
<path d="M1000 755l6-6 6-6 2 3-5 6-6 5z" fill="#d85a30"/><path d="M998 753l5-2 3 4-5 2z" fill="#eec9a0"/>
<path d="M1031 741l5 3 5 1-3 5 2 5-5-1-4 3-4-3-5 1 2-5-3-5 5-1z" fill="#f08018"/><rect x="1028" y="747" width="6" height="5" fill="#fff"/>
<rect x="1050" y="741" width="11" height="12" fill="#c92a2a"/><text x="1051" y="751" style="fill:#fff;font-size:7px">SW</text><text x="1062" y="757" style="fill:#f8e020;font-size:12px;font-weight:bold">!</text>
<rect x="1073" y="741" width="15" height="15" fill="#a8101c"/><path d="M1075 754q4-3 6-10 1 7 6 7-6 0-12 3z" fill="none" stroke="#fff"/>
<rect x="1096" y="741" width="15" height="16" rx="2" fill="#cc1e26"/><text x="1103.500" y="754" class="c" style="fill:#fff;font-size:13px;font-weight:bold">Q</text>
<rect x="1121" y="741" width="14" height="17" fill="#3b8ec4"/><text x="1128" y="750" class="c" style="fill:#fff;font-size:7px">EX</text><rect x="1122" y="752" width="12" height="5" fill="#e8e0a8"/>
<rect x="1146" y="743" width="5" height="12" fill="none" stroke="#fff" stroke-width="1.200"/><rect x="1153" y="743" width="6" height="13" fill="none" stroke="#fff" stroke-width="1.200"/><rect x="1154" y="747" width="4" height="8" fill="#fff"/><path d="M1147 741h3M1154 741h4" stroke="#fff"/>
<rect x="1168" y="741" width="14" height="14" fill="#a8101c"/><text x="1175" y="752" class="c" style="fill:#fff;font-size:10px;font-weight:bold">A</text>
<path d="M1193 754h2v2h-2zM1196 752h2v4h-2zM1199 749h2v7h-2zM1202 746h2v10h-2zM1205 743h2v13h-2z" fill="#fff"/>
<path d="M1218 746h3l3-3v13l-3-3h-3z" fill="#eee"/><path d="M1226 746q2 3 0 6M1228 744q3 5 0 10" stroke="#ddd" fill="none"/>
<circle cx="1248" cy="749" r="8" fill="#77ad45"/><text x="1248" y="754" class="c" style="fill:#fff;font-size:13px;font-weight:bold">µ</text>
<path d="M1265 741v17" stroke="#fff" stroke-width="1.300"/><path d="M1266 742h5l3 2h3v5h-5l-3-2h-3z" fill="#fff"/>
<text x="1322" y="745" class="c" style="fill:#f4f4f4;font-size:12px">6:55 PM</text>
<text x="1323" y="762" class="c" style="fill:#f4f4f4;font-size:12px">10/21/2019</text>
</svg>
</body></html>
